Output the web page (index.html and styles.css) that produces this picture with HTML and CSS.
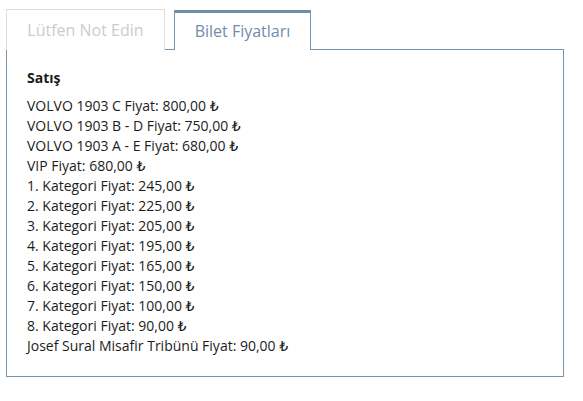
FILE: index.html
```html
<!DOCTYPE html>
<html lang="tr">
<head>
<meta charset="utf-8">
<title>Bilet Fiyatları</title>
<link rel="stylesheet" href="styles.css">
</head>
<body>
<div class="wrap">
  <div class="tabs">
    <div class="tab">Lütfen Not Edin</div>
    <div class="tab active">Bilet Fiyatları</div>
  </div>
  <div class="panel">
    <div class="heading">Satış</div>
    <div class="line">VOLVO 1903 C Fiyat: 800,00 ₺</div>
    <div class="line">VOLVO 1903 B - D Fiyat: 750,00 ₺</div>
    <div class="line">VOLVO 1903 A - E Fiyat: 680,00 ₺</div>
    <div class="line">VIP Fiyat: 680,00 ₺</div>
    <div class="line">1. Kategori Fiyat: 245,00 ₺</div>
    <div class="line">2. Kategori Fiyat: 225,00 ₺</div>
    <div class="line">3. Kategori Fiyat: 205,00 ₺</div>
    <div class="line">4. Kategori Fiyat: 195,00 ₺</div>
    <div class="line">5. Kategori Fiyat: 165,00 ₺</div>
    <div class="line">6. Kategori Fiyat: 150,00 ₺</div>
    <div class="line">7. Kategori Fiyat: 100,00 ₺</div>
    <div class="line">8. Kategori Fiyat: 90,00 ₺</div>
    <div class="line">Josef Sural Misafir Tribünü Fiyat: 90,00 ₺</div>
  </div>
</div>
</body>
</html>
```

FILE: styles.css
```css
html, body {
  margin: 0;
  padding: 0;
  background: #ffffff;
}
body {
  font-family: "Open Sans", "DejaVu Sans", sans-serif;
  color: #1c1c1c;
}
.wrap {
  padding: 9px 0 0 6px;
  width: 558px;
}
.tabs {
  display: flex;
  align-items: flex-end;
  gap: 9px;
}
.tab {
  box-sizing: border-box;
  width: 159px;
  height: 41px;
  border: 1px solid #dddddd;
  border-bottom: 0;
  display: flex;
  align-items: center;
  justify-content: center;
  font-size: 16px;
  color: #cccccc;
  background: #ffffff;
}
.tab.active {
  width: 137px;
  height: 40px;
  border: 1px solid #7b94aa;
  border-top: 3px solid #6f8eae;
  border-bottom: 0;
  padding-bottom: 2px;
  color: #6f8cab;
  position: relative;
  z-index: 1;
}
.panel {
  box-sizing: border-box;
  margin-top: -1px;
  height: 328px;
  border: 1px solid #7b94a8;
  padding: 18px 20px;
  font-size: 14px;
  line-height: 20px;
}
.heading {
  font-weight: 700;
  font-size: 14px;
  margin-bottom: 8px;
}
.line {
  white-space: nowrap;
}
```
